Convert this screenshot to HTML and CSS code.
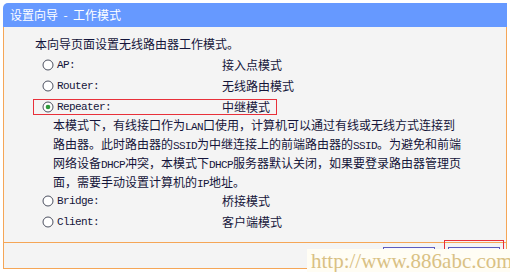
FILE: index.html
```html
<!DOCTYPE html>
<html lang="zh-CN">
<head>
<meta charset="utf-8">
<title>设置向导 - 工作模式</title>
<link rel="stylesheet" href="styles.css">
</head>
<body>
<div class="frame">
  <div class="hd">设置向导  -  工作模式</div>
  <div class="content">
    <p class="intro">本向导页面设置无线路由器工作模式。</p>
    <div class="mode">
      <span class="opt"><svg class="radio" viewBox="0 0 12 12"><circle cx="6" cy="6" r="5" /></svg><span class="en">AP:</span></span>
      <span class="zh">接入点模式</span>
    </div>
    <div class="mode">
      <span class="opt"><svg class="radio" viewBox="0 0 12 12"><circle cx="6" cy="6" r="5" /></svg><span class="en">Router:</span></span>
      <span class="zh">无线路由模式</span>
    </div>
    <div class="mode sel">
      <span class="opt"><svg class="radio" viewBox="0 0 12 12"><circle cx="6" cy="6" r="5" /><circle class="dot" cx="6" cy="6" r="2.3" /></svg><span class="en">Repeater:</span></span>
      <span class="zh">中继模式</span>
    </div>
    <div class="desc">
      <div>本模式下，有线接口作为<span class="en">LAN</span>口使用，计算机可以通过有线或无线方式连接到</div>
      <div>路由器。此时路由器的<span class="en">SSID</span>为中继连接上的前端路由器的<span class="en">SSID</span>。为避免和前端</div>
      <div>网络设备<span class="en">DHCP</span>冲突，本模式下<span class="en">DHCP</span>服务器默认关闭，如果要登录路由器管理页</div>
      <div>面，需要手动设置计算机的<span class="en">IP</span>地址。</div>
    </div>
    <div class="mode">
      <span class="opt"><svg class="radio" viewBox="0 0 12 12"><circle cx="6" cy="6" r="5" /></svg><span class="en">Bridge:</span></span>
      <span class="zh">桥接模式</span>
    </div>
    <div class="mode">
      <span class="opt"><svg class="radio" viewBox="0 0 12 12"><circle cx="6" cy="6" r="5" /></svg><span class="en">Client:</span></span>
      <span class="zh">客户端模式</span>
    </div>
  </div>
  <div class="foot">
    <button class="btn">上一步</button>
    <span class="hl"><button class="btn">下一步</button></span>
  </div>
</div>
<div class="wm">http://www.886abc.com</div>
</body>
</html>
```

FILE: styles.css
```css
html, body {
  margin: 0;
  padding: 0;
  background: #ffffff;
}

body {
  width: 510px;
  height: 272px;
  overflow: hidden;
  position: relative;
  font-family: "Noto Sans CJK SC", sans-serif;
  font-size: 12px;
  color: #14143a;
}

.frame {
  margin: 3px 3px 0 3px;
  width: 504px;
}

.hd {
  height: 24px;
  line-height: 24px;
  background: #6699ff;
  color: #ffffff;
  padding-left: 7px;
  border-radius: 5px 0 0 0;
  font-size: 12px;
  white-space: pre;
}

.content {
  background: #f4f4f4;
  border-left: 1px solid #f5a657;
  border-right: 1px solid #f5a657;
  border-bottom: 1px solid #f5a657;
  height: 216px;
  box-sizing: border-box;
  padding-top: 9px;
}

.intro {
  margin: 0 0 5px 31px;
  line-height: 16px;
  height: 16px;
}

.en {
  font-family: "Liberation Mono", monospace;
  font-size: 11px;
  letter-spacing: -0.6px;
  line-height: 1;
}

.mode {
  display: flex;
  align-items: center;
  margin-left: 29px;
  width: 244px;
  height: 16px;
  box-sizing: border-box;
  border: 1px solid transparent;
  margin-bottom: 5px;
  white-space: nowrap;
}

.mode.sel {
  border-color: #e8303a;
  margin-bottom: 0;
}

.opt {
  display: flex;
  align-items: center;
  width: 188px;
  flex: none;
  padding-left: 8px;
  box-sizing: border-box;
  line-height: 14px;
}

.radio {
  width: 12px;
  height: 12px;
  margin-right: 3px;
  flex: none;
}

.radio circle {
  fill: #ffffff;
  stroke: #4c5060;
  stroke-width: 1;
}

.radio circle.dot {
  fill: #2f9a3c;
  stroke: none;
}

.zh {
  line-height: 14px;
  flex: none;
}

.desc {
  margin-left: 49px;
  margin-bottom: 2px;
  white-space: nowrap;
}

.desc > div {
  height: 19px;
  line-height: 19px;
}

.foot {
  background: #f4f4f4;
  border-left: 1px solid #f5a657;
  border-right: 1px solid #f5a657;
  border-bottom: 1px solid #f5a657;
  height: 26px;
  box-sizing: border-box;
  display: flex;
  justify-content: flex-end;
  align-items: flex-start;
  gap: 13px;
  padding: 4px 6px 0 0;
}

.btn {
  width: 52px;
  height: 21px;
  box-sizing: border-box;
  border: 1px solid #5c5cbf;
  background: #f8f8ff;
  font-family: "Noto Sans CJK SC", sans-serif;
  font-size: 12px;
  line-height: 14px;
  color: #14143a;
  padding: 0;
}

.hl {
  position: relative;
  display: block;
}

.hl::after {
  content: "";
  position: absolute;
  left: -4px;
  right: -4px;
  top: -7px;
  bottom: -4px;
  border: 1px solid #e8303a;
}

.wm {
  position: absolute;
  left: 307px;
  top: 249px;
  width: 203px;
  height: 23px;
  background: #fffdf4;
  color: #d9c184;
  font-family: "Liberation Serif", serif;
  font-size: 21px;
  line-height: 25px;
  padding-left: 4px;
  box-sizing: border-box;
  white-space: nowrap;
  overflow: hidden;
}
```
